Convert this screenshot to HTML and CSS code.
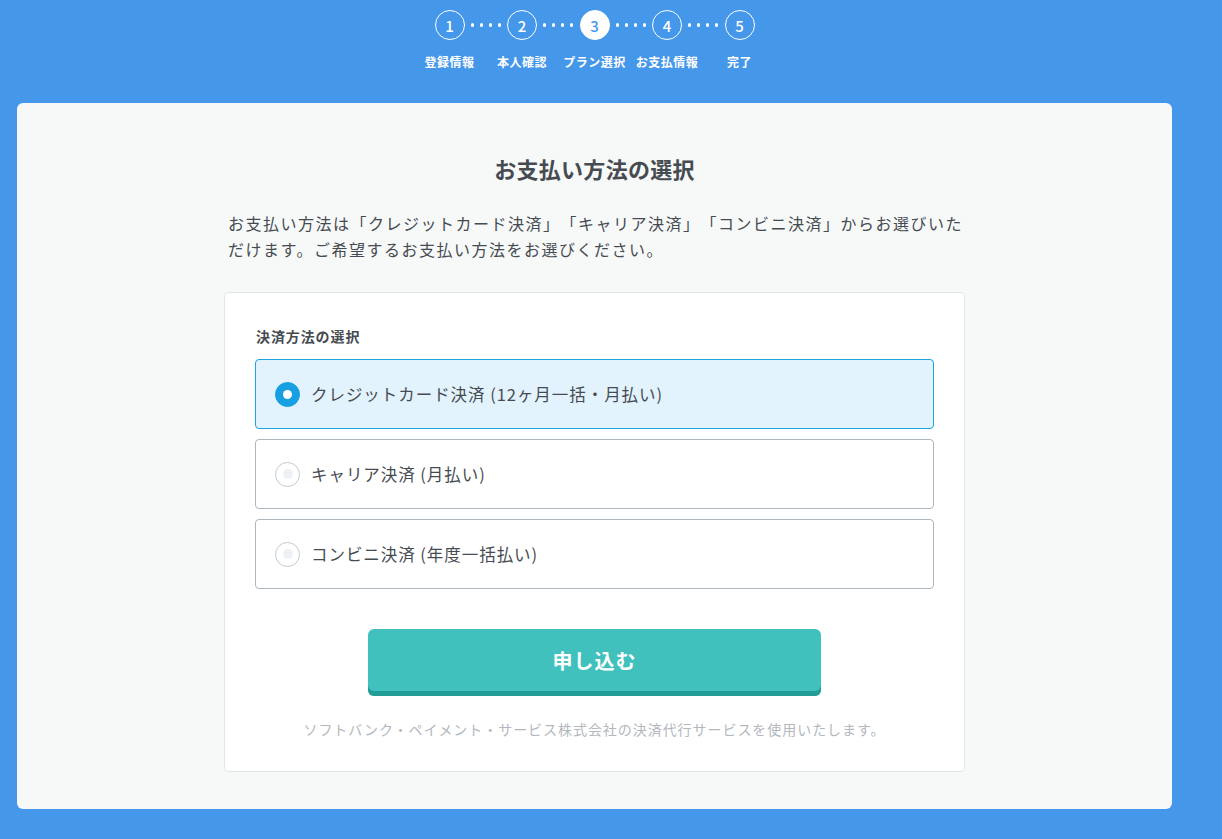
FILE: index.html
```html
<!DOCTYPE html>
<html lang="ja">
<head>
<meta charset="utf-8">
<title>お支払い方法の選択</title>
<link rel="stylesheet" href="styles.css">
</head>
<body>
<div class="page">
  <header class="stepper">
    <div class="steps-row">
      <div class="circle">1</div>
      <div class="dots"><i></i><i></i><i></i><i></i></div>
      <div class="circle">2</div>
      <div class="dots"><i></i><i></i><i></i><i></i></div>
      <div class="circle active">3</div>
      <div class="dots"><i></i><i></i><i></i><i></i></div>
      <div class="circle">4</div>
      <div class="dots"><i></i><i></i><i></i><i></i></div>
      <div class="circle">5</div>
    </div>
    <div class="labels-row">
      <span>登録情報</span>
      <span>本人確認</span>
      <span>プラン選択</span>
      <span>お支払情報</span>
      <span>完了</span>
    </div>
  </header>

  <main class="card">
    <div class="content">
      <h1 class="title">お支払い方法の選択</h1>
      <p class="lead">お支払い方法は「クレジットカード決済」「キャリア決済」「コンビニ決済」からお選びいただけます。ご希望するお支払い方法をお選びください。</p>

      <section class="box">
        <div class="box-label">決済方法の選択</div>
        <div class="options">
          <label class="option selected">
            <span class="radio on"></span>
            <span class="opt-text">クレジットカード決済 (12ヶ月一括・月払い)</span>
          </label>
          <label class="option">
            <span class="radio"></span>
            <span class="opt-text">キャリア決済 (月払い)</span>
          </label>
          <label class="option">
            <span class="radio"></span>
            <span class="opt-text">コンビニ決済 (年度一括払い)</span>
          </label>
        </div>
        <div class="btn-wrap">
          <button class="submit" type="button">申し込む</button>
        </div>
        <p class="note">ソフトバンク・ペイメント・サービス株式会社の決済代行サービスを使用いたします。</p>
      </section>
    </div>
  </main>
</div>
</body>
</html>
```

FILE: styles.css
```css
* { box-sizing: border-box; }
html, body { margin: 0; padding: 0; }
body {
  background: #4597e9;
  font-family: "Noto Sans CJK JP", "Noto Sans", sans-serif;
  color: #464b51;
  text-spacing-trim: space-all;
}
.page {
  width: 1155px;
  margin-left: 17px;
  height: 839px;
}
.stepper {
  height: 103px;
  padding-top: 10px;
  display: flex;
  flex-direction: column;
  align-items: center;
}
.steps-row {
  display: flex;
  align-items: center;
  height: 30px;
}
.circle {
  width: 30px;
  height: 30px;
  border: 1.5px solid #fff;
  border-radius: 50%;
  color: #fff;
  font-size: 15px;
  font-weight: 500;
  display: flex;
  align-items: center;
  justify-content: center;
  line-height: 1;
}
.circle.active {
  background: #fff;
  color: #4597e9;
}
.dots {
  width: 42.5px;
  display: flex;
  justify-content: center;
  gap: 5.8px;
}
.dots i {
  display: block;
  width: 3.2px;
  height: 3.2px;
  border-radius: 50%;
  background: #fff;
}
.labels-row {
  display: flex;
  margin-top: 13px;
}
.labels-row span {
  width: 72.5px;
  text-align: center;
  color: #fff;
  font-size: 12px;
  font-weight: 700;
  letter-spacing: 0.5px;
  line-height: 18px;
  white-space: nowrap;
}
.card {
  background: #f7f9f9;
  border-radius: 6px;
  height: 706px;
  padding-top: 50px;
}
.content {
  width: 741px;
  margin: 0 auto;
}
.title {
  margin: 0;
  text-align: center;
  font-size: 22px;
  line-height: 30px;
  font-weight: 700;
  color: #464b51;
  letter-spacing: 0.3px;
}
.lead {
  margin: 27px 0 0;
  padding: 0 0 0 4px;
  font-size: 16px;
  line-height: 26px;
  letter-spacing: 1.5px;
  color: #464b51;
}
.box {
  margin-top: 30px;
  background: #fff;
  border: 1px solid #e2e6e8;
  border-radius: 4px;
  padding: 33px 30px 32px;
}
.box-label {
  font-size: 14px;
  font-weight: 700;
  line-height: 20px;
  letter-spacing: 0.9px;
  padding-left: 1px;
}
.options {
  margin-top: 13px;
  display: flex;
  flex-direction: column;
  gap: 10px;
}
.option {
  height: 70px;
  border: 1px solid #aeb6bd;
  border-radius: 4px;
  display: flex;
  align-items: center;
  padding-left: 19px;
  background: #fff;
}
.option.selected {
  background: #e2f3fd;
  border-color: #1ea2e0;
}
.radio {
  width: 25px;
  height: 25px;
  border-radius: 50%;
  border: 1px solid #c4cad0;
  background: #fff;
  display: flex;
  align-items: center;
  justify-content: center;
  flex: none;
}
.radio::after {
  content: "";
  width: 10px;
  height: 10px;
  border-radius: 50%;
  background: #eef1f6;
}
.radio.on {
  background: #16a0e1;
  border-color: #16a0e1;
}
.radio.on::after {
  background: #fff;
  width: 9px;
  height: 9px;
}
.opt-text {
  margin-left: 11px;
  font-size: 16.5px;
  letter-spacing: 0.95px;
  color: #464b51;
}
.btn-wrap {
  margin-top: 40px;
  display: flex;
  justify-content: center;
}
.submit {
  width: 453px;
  height: 67px;
  border: none;
  border-radius: 6px;
  background: #40c1bd;
  box-shadow: inset 0 -5px 0 #229c94;
  color: #fff;
  font-family: inherit;
  font-size: 20px;
  font-weight: 700;
  letter-spacing: 1px;
  padding: 0 0 5px;
  cursor: pointer;
}
.note {
  margin: 23px 0 0;
  text-align: center;
  font-size: 14px;
  line-height: 20px;
  letter-spacing: 0.95px;
  color: #b3b8be;
}
```
